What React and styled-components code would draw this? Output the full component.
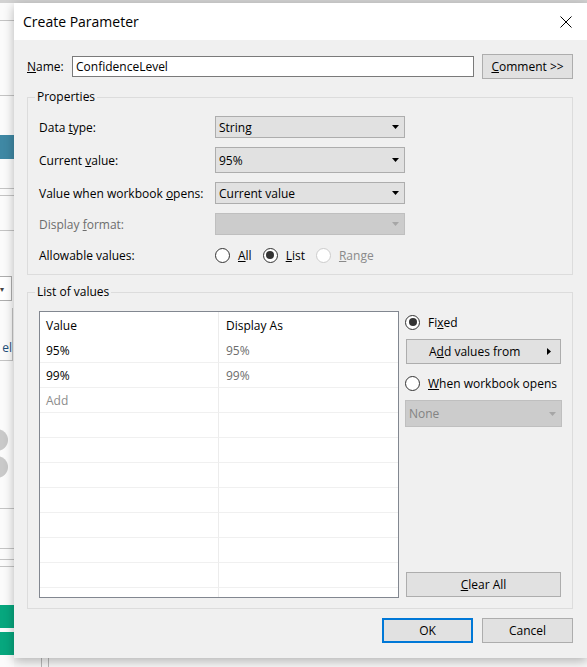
import React from "react";
import styled, { createGlobalStyle } from "styled-components";

const GlobalStyle = createGlobalStyle`
  html, body {
    margin: 0;
    padding: 0;
  }
  body {
    font-family: "Open Sans", "Noto Sans", sans-serif;
    font-size: 12px;
    color: #000;
  }
  u {
    text-underline-offset: 1px;
  }
`;

const Screen = styled.div`
  position: relative;
  width: 587px;
  height: 667px;
  overflow: hidden;
  background: #f7f7f7;
  display: flex;
  flex-direction: column;
`;

/* ---------- background app, mostly hidden behind the dialog ---------- */

const TopBar = styled.div`
  height: 3px;
  background: #d2d2d2;
  flex-shrink: 0;
`;

const Backdrop = styled.div`
  flex: 1;
  display: flex;
`;

const SideStrip = styled.div`
  width: 14px;
  display: flex;
  flex-direction: column;
  background: #fbfbfb;
`;

const Rule = styled.div`
  height: 1px;
  margin-top: ${(p) => p.$top}px;
  background: #c4c4c4;
  flex-shrink: 0;
`;

const Block = styled.div`
  height: ${(p) => p.$h}px;
  margin-top: ${(p) => p.$top}px;
  background: ${(p) => p.$color};
  flex-shrink: 0;
`;

const StubSelect = styled.div`
  height: 25px;
  width: 12px;
  margin-top: ${(p) => p.$top}px;
  box-sizing: border-box;
  border: 1px solid #adadad;
  border-left: 0;
  background: #fff;
  display: flex;
  align-items: center;
  font-size: 8px;
  color: #444;
  flex-shrink: 0;
`;

const StubLabel = styled.div`
  height: 53px;
  width: 13px;
  margin-top: ${(p) => p.$top}px;
  box-sizing: border-box;
  border-right: 1px solid #c4c4c4;
  border-bottom: 1px solid #c4c4c4;
  display: flex;
  align-items: flex-end;
  justify-content: flex-end;
  padding-bottom: 4px;
  overflow: hidden;
  color: #1d4f7a;
  flex-shrink: 0;
`;

const StubCircle = styled.div`
  width: 22px;
  height: 22px;
  margin-left: -14px;
  margin-top: ${(p) => p.$top}px;
  border-radius: 50%;
  background: #c9c9c9;
  flex-shrink: 0;
`;

const MainArea = styled.div`
  flex: 1;
  display: flex;
  flex-direction: column;
  justify-content: flex-end;
`;

const BottomEdge = styled.div`
  height: 9px;
  display: flex;
  gap: 6px;
  padding-left: 27px;
`;

const VLine = styled.div`
  width: 1px;
  background: #b8b8b8;
`;

/* ---------- dialog ---------- */

const Dialog = styled.div`
  position: absolute;
  left: 14px;
  top: 3px;
  width: 573px;
  height: 655px;
  background: #f0f0f0;
  box-shadow: 0 3px 10px rgba(0, 0, 0, 0.28);
  display: flex;
  flex-direction: column;
`;

const TitleBar = styled.div`
  height: 37px;
  background: #fff;
  display: flex;
  align-items: center;
  justify-content: space-between;
  padding: 0 15px 0 9px;
  font-size: 14px;
  flex-shrink: 0;
`;

const Body = styled.div`
  flex: 1;
  display: flex;
  flex-direction: column;
  padding: 14px 14px 0 13px;
`;

const NameRow = styled.div`
  display: flex;
  align-items: center;
  height: 25px;
`;

const NameLabel = styled.label`
  width: 45px;
`;

const TextInput = styled.div`
  width: 402px;
  height: 21px;
  box-sizing: border-box;
  border: 1px solid #7a7a7a;
  background: #fff;
  padding-left: 3px;
  line-height: 19px;
`;

const Button = styled.div`
  width: ${(p) => p.$w || 91}px;
  height: 25px;
  box-sizing: border-box;
  margin-left: ${(p) => p.$ml || 0}px;
  background: #e1e1e1;
  border: ${(p) => (p.$primary ? "2px solid #0078d7" : "1px solid #adadad")};
  display: flex;
  align-items: center;
  justify-content: ${(p) => p.$justify || "center"};
  padding: ${(p) => p.$pad || "0"};
  flex-shrink: 0;
`;

const Group = styled.fieldset`
  margin: ${(p) => p.$top}px 0 0 0;
  padding: 0;
  border: 1px solid #dcdcdc;
  min-width: 0;
`;

const Legend = styled.legend`
  margin-left: 7px;
  padding: 0 2px;
  line-height: 16px;
`;

const PropGrid = styled.div`
  display: grid;
  grid-template-columns: 176px 190px;
  grid-template-rows: 22px 26px 22px 22px 22px;
  row-gap: 9px;
  align-items: center;
  padding: 11px 0 8px 11px;
`;

const RowLabel = styled.div`
  color: ${(p) => (p.$disabled ? "#6d6d6d" : "#000")};
`;

const Select = styled.div`
  height: ${(p) => (p.$h ? `${p.$h}px` : "100%")};
  width: ${(p) => (p.$w ? `${p.$w}px` : "auto")};
  margin-top: ${(p) => p.$top || 0}px;
  box-sizing: border-box;
  border: 1px solid ${(p) => (p.$disabled ? "#bfbfbf" : "#adadad")};
  background: ${(p) => (p.$disabled ? "#cccccc" : "#e1e1e1")};
  color: ${(p) => (p.$disabled ? "#838383" : "#000")};
  display: flex;
  align-items: center;
  justify-content: space-between;
  padding: 0 5px 0 3px;
  flex-shrink: 0;
`;

const RadioGroup = styled.div`
  display: flex;
  align-items: center;
  gap: 11px;
`;

const RadioOption = styled.div`
  display: flex;
  align-items: center;
  gap: 8px;
  height: ${(p) => p.$h || 20}px;
  margin-top: ${(p) => p.$top || 0}px;
  color: ${(p) => (p.$disabled ? "#8a8a8a" : "#000")};
  flex-shrink: 0;
`;

const RadioCircle = styled.span`
  width: 15px;
  height: 15px;
  box-sizing: border-box;
  border-radius: 50%;
  border: 1px solid ${(p) => (p.$disabled ? "#cccccc" : "#333")};
  background: #fff;
  display: flex;
  align-items: center;
  justify-content: center;
  flex-shrink: 0;

  &::after {
    content: "";
    width: 8px;
    height: 8px;
    border-radius: 50%;
    background: #333;
    display: ${(p) => (p.$checked ? "block" : "none")};
  }
`;

const ListArea = styled.div`
  display: flex;
  gap: 6px;
  padding: 11px 10px 10px 11px;
`;

const Table = styled.div`
  width: 360px;
  height: 287px;
  box-sizing: border-box;
  border: 1px solid #828790;
  background: #fff;
  overflow: hidden;
  display: grid;
  grid-template-columns: 179px 1fr;
  grid-auto-rows: 25px;
  grid-template-rows: 26px;
`;

const Cell = styled.div`
  box-sizing: border-box;
  padding-left: ${(p) => (p.$first ? 6 : 7)}px;
  display: flex;
  align-items: center;
  border-bottom: ${(p) => (p.$head ? "0" : "1px solid #f0f0f0")};
  border-right: ${(p) => (p.$first ? "1px solid #ececec" : "0")};
  color: ${(p) => p.$color || "#000"};
`;

const SideCol = styled.div`
  width: 157px;
  display: flex;
  flex-direction: column;
`;

const Spacer = styled.div`
  flex: 1;
`;

const Footer = styled.div`
  display: flex;
  justify-content: flex-end;
  gap: 9px;
  margin-top: 9px;
`;

function DownArrow({ color = "#000" }) {
  return (
    <svg width="7" height="4" viewBox="0 0 7 4">
      <polygon points="0,0 7,0 3.5,4" fill={color} />
    </svg>
  );
}

function RightArrow() {
  return (
    <svg width="4" height="7" viewBox="0 0 4 7">
      <polygon points="0,0 4,3.5 0,7" fill="#000" />
    </svg>
  );
}

function CloseIcon() {
  return (
    <svg width="12" height="12" viewBox="0 0 12 12">
      <path d="M0.5 0.5 L11.5 11.5 M11.5 0.5 L0.5 11.5" stroke="#000" strokeWidth="1" />
    </svg>
  );
}

function Radio({ label, checked, disabled, h, top }) {
  return (
    <RadioOption $disabled={disabled} $h={h} $top={top}>
      <RadioCircle $checked={checked} $disabled={disabled} />
      <span>{label}</span>
    </RadioOption>
  );
}

const rows = [
  { value: "95%", display: "95%" },
  { value: "99%", display: "99%" },
  { value: "Add", display: "", placeholder: true },
  ...Array.from({ length: 9 }, () => ({ value: "", display: "" })),
];

export default function App() {
  return (
    <>
      <GlobalStyle />
      <Screen>
        <TopBar />
        <Backdrop>
          <SideStrip>
            <Rule $top={17} />
            <Rule $top={74} />
            <Block $top={39} $h={24} $color="#3f88a4" />
            <Rule $top={29} />
            <Rule $top={6} />
            <Rule $top={34} />
            <StubSelect $top={45}>▾</StubSelect>
            <StubLabel $top={7}>el</StubLabel>
            <StubCircle $top={68} />
            <StubCircle $top={5} />
            <Rule $top={30} />
            <Rule $top={39} />
            <Rule $top={10} />
            <Rule $top={6} />
            <Block $top={38} $h={23} $color="#07a77e" />
            <Block $top={4} $h={23} $color="#07a77e" />
          </SideStrip>
          <MainArea>
            <BottomEdge>
              <VLine />
              <VLine />
            </BottomEdge>
          </MainArea>
        </Backdrop>

        <Dialog>
          <TitleBar>
            <span>Create Parameter</span>
            <CloseIcon />
          </TitleBar>
          <Body>
            <NameRow>
              <NameLabel>
                <u>N</u>ame:
              </NameLabel>
              <TextInput>ConfidenceLevel</TextInput>
              <Button $ml={8}>
                <span>
                  <u>C</u>omment &gt;&gt;
                </span>
              </Button>
            </NameRow>

            <Group $top={10}>
              <Legend>Properties</Legend>
              <PropGrid>
                <RowLabel>
                  Data <u>t</u>ype:
                </RowLabel>
                <Select>
                  <span>String</span>
                  <DownArrow />
                </Select>
                <RowLabel>
                  Current <u>v</u>alue:
                </RowLabel>
                <Select>
                  <span>95%</span>
                  <DownArrow />
                </Select>
                <RowLabel>
                  Value when workbook <u>o</u>pens:
                </RowLabel>
                <Select>
                  <span>Current value</span>
                  <DownArrow />
                </Select>
                <RowLabel $disabled>
                  Display <u>f</u>ormat:
                </RowLabel>
                <Select $disabled>
                  <span />
                  <DownArrow color="#a6a6a6" />
                </Select>
                <RowLabel>Allowable values:</RowLabel>
                <RadioGroup>
                  <Radio label={<><u>A</u>ll</>} />
                  <Radio label={<><u>L</u>ist</>} checked />
                  <Radio label={<><u>R</u>ange</>} disabled />
                </RadioGroup>
              </PropGrid>
            </Group>

            <Group $top={9}>
              <Legend>List of values</Legend>
              <ListArea>
                <Table>
                  <Cell $first $head>Value</Cell>
                  <Cell $head>Display As</Cell>
                  {rows.map((r, i) => (
                    <React.Fragment key={i}>
                      <Cell $first $color={r.placeholder ? "#8c8c8c" : "#000"}>
                        {r.value}
                      </Cell>
                      <Cell $color="#6d6d6d">{r.display}</Cell>
                    </React.Fragment>
                  ))}
                </Table>
                <SideCol>
                  <Radio label={<>Fi<u>x</u>ed</>} checked top={1} />
                  <Button $w={155} $ml={1} $justify="space-between" $pad="0 9px 0 22px" style={{ marginTop: 7 }}>
                    <span>
                      A<u>d</u>d values from
                    </span>
                    <RightArrow />
                  </Button>
                  <Radio label={<><u>W</u>hen workbook opens</>} top={9} />
                  <Select $disabled $h={27} $w={157} $top={7}>
                    <span>None</span>
                    <DownArrow color="#a6a6a6" />
                  </Select>
                  <Spacer />
                  <Button $w={155} $ml={1} style={{ marginBottom: 1 }}>
                    <span>
                      <u>C</u>lear All
                    </span>
                  </Button>
                </SideCol>
              </ListArea>
            </Group>

            <Footer>
              <Button $primary>OK</Button>
              <Button>Cancel</Button>
            </Footer>
          </Body>
        </Dialog>
      </Screen>
    </>
  );
}
